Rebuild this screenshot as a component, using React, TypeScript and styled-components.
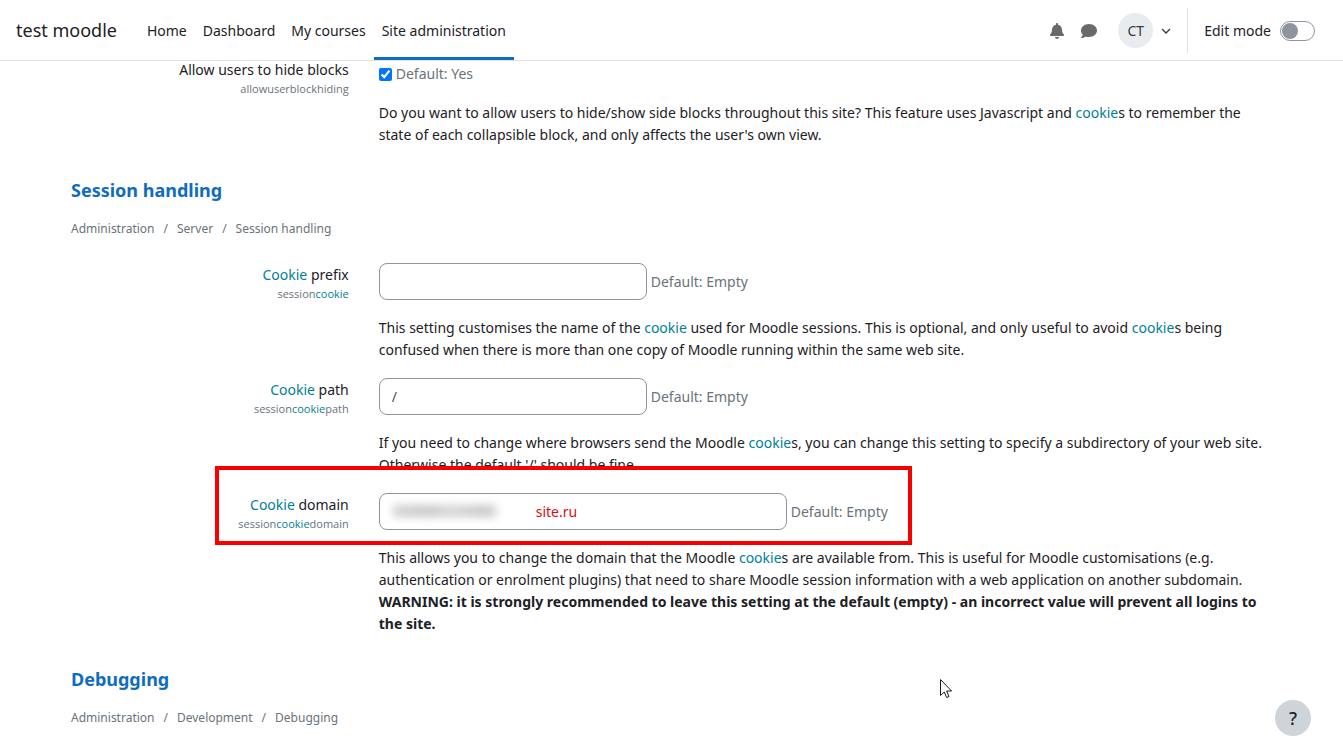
import React from 'react';
import styled, { createGlobalStyle } from 'styled-components';
import { FaBell, FaComment } from 'react-icons/fa';

const GlobalStyle = createGlobalStyle`
  *, *::before, *::after { box-sizing: border-box; }
  html, body { height: 100%; overflow: hidden; }
  body {
    margin: 0;
    background: #fff;
    color: #1d2125;
    font-family: "Noto Sans", "Open Sans", sans-serif;
    font-size: 14px;
    line-height: 22px;
  }
`;

const Navbar = styled.header`
  position: fixed;
  top: 0;
  left: 0;
  right: 0;
  z-index: 10;
  height: 61px;
  display: flex;
  align-items: stretch;
  padding: 0 28px 0 16px;
  background: #fff;
  border-bottom: 1px solid #dee2e6;
`;

const Brand = styled.a`
  display: flex;
  align-items: center;
  margin-right: 22px;
  font-size: 18px;
  color: #1d2125;
  text-decoration: none;
  white-space: nowrap;
`;

const PrimaryNav = styled.nav`
  display: flex;
`;

const NavLink = styled.a<{ $active?: boolean }>`
  display: flex;
  align-items: center;
  padding: 4px 8px 0;
  border-bottom: 3px solid ${(p) => (p.$active ? '#0f6cbf' : 'transparent')};
  color: #1d2125;
  text-decoration: none;
  white-space: nowrap;
`;

const UserTools = styled.div`
  display: flex;
  align-items: center;
  margin-left: auto;
  padding-top: 1px;
`;

const IconButton = styled.button`
  display: flex;
  align-items: center;
  justify-content: center;
  width: 32px;
  height: 32px;
  padding: 0;
  border: 0;
  background: none;
  color: #6a6a6a;
  font-size: 16px;
`;

const UserMenu = styled.button`
  display: flex;
  align-items: center;
  gap: 8px;
  margin-left: 13px;
  padding: 0;
  border: 0;
  background: none;
  color: #343a40;
  font: inherit;
`;

const Avatar = styled.span`
  display: flex;
  align-items: center;
  justify-content: center;
  width: 35px;
  height: 35px;
  border-radius: 50%;
  background: #e9ecef;
`;

const EditMode = styled.label`
  display: flex;
  align-items: center;
  gap: 9px;
  height: 45px;
  margin-left: 16px;
  padding-left: 16px;
  border-left: 1px solid #dee2e6;
  white-space: nowrap;
`;

const Switch = styled.input`
  appearance: none;
  display: flex;
  align-items: center;
  width: 35px;
  height: 20px;
  margin: 0;
  padding: 0 1px;
  border: 1px solid #8f959e;
  border-radius: 10px;
  background: #fff;

  &::before {
    content: '';
    width: 16px;
    height: 16px;
    border-radius: 50%;
    background: #8f95a0;
  }
`;

const Main = styled.main`
  padding: 58px 56px 0;
`;

const Setting = styled.div`
  position: relative;
  display: grid;
  grid-template-columns: 1fr 3fr;
  margin-bottom: 17px;
`;

const LabelCell = styled.div`
  padding: 1px 15px 0;
  text-align: right;
`;

const SettingLabel = styled.label`
  display: block;
`;

const ShortName = styled.span`
  display: block;
  font-family: "Open Sans", "Noto Sans", sans-serif;
  font-size: 11px;
  line-height: 16px;
  color: #6a737b;
`;

const ValueCell = styled.div<{ $compact?: boolean }>`
  padding: ${(p) => (p.$compact ? '5px' : '0')} 15px 0;
`;

const ValueRow = styled.div`
  position: relative;
  display: flex;
  align-items: center;
  gap: 4px;
`;

const Checkbox = styled.input`
  width: 13px;
  height: 13px;
  margin: 0;
  accent-color: #0075ff;
`;

const TextInput = styled.input<{ $wide?: boolean; $masked?: boolean }>`
  width: ${(p) => (p.$wide ? '408px' : '268px')};
  height: 37px;
  padding: 0 12px 0 ${(p) => (p.$masked ? '156px' : '12px')};
  border: 1px solid #8f959e;
  border-radius: 8px;
  background: #fff;
  color: ${(p) => (p.$masked ? '#e00b0b' : '#495057')};
  font: inherit;
`;

const MaskedHost = styled.span`
  position: absolute;
  left: 14px;
  top: 12px;
  width: 104px;
  height: 12px;
  filter: blur(4px);
  background: linear-gradient(90deg, #d2d2d2, #c8c8c8 35%, #d6d6d6 55%, #c8c8c8 90%, #dcdcdc);
`;

const DefaultInfo = styled.span`
  color: #6a737b;
`;

const Description = styled.p`
  margin: 17px 0 0;
`;

const GlossaryLink = styled.a`
  color: #008196;
  text-decoration: none;
`;

const SectionTitle = styled.h3`
  margin: 33px 15px 17px;
  font-size: 18px;
  line-height: 22px;
  font-weight: 700;
  color: #0f6cbf;
`;

const Breadcrumb = styled.ol`
  display: flex;
  margin: 0 15px 23px;
  padding: 0;
  list-style: none;
  font-size: 12px;
  color: #6a737b;

  li + li::before {
    content: '/';
    padding: 0 9px;
  }
`;

const Crumb = styled.a`
  color: inherit;
  text-decoration: none;
`;

const Highlight = styled.div`
  position: absolute;
  top: -27px;
  left: 159px;
  width: 697px;
  height: 79px;
  border: 4px solid #f80000;
  pointer-events: none;
`;

const HelpButton = styled.button`
  position: fixed;
  right: 32px;
  bottom: 20px;
  width: 36px;
  height: 36px;
  padding: 0;
  border: 0;
  border-radius: 50%;
  background: #ced4da;
  color: #1d2125;
  font: inherit;
  font-size: 18px;
  font-weight: 500;
`;

const Pointer = styled.svg`
  position: fixed;
  left: 940px;
  top: 679px;
`;

const Term = ({ children }: { children: React.ReactNode }) => (
  <GlossaryLink href="#">{children}</GlossaryLink>
);

const Crumbs = ({ items }: { items: string[] }) => (
  <Breadcrumb>
    {items.map((item) => (
      <li key={item}>
        <Crumb href="#">{item}</Crumb>
      </li>
    ))}
  </Breadcrumb>
);

export default function App() {
  return (
    <>
      <GlobalStyle />
      <Navbar>
        <Brand href="#">test moodle</Brand>
        <PrimaryNav>
          <NavLink href="#">Home</NavLink>
          <NavLink href="#">Dashboard</NavLink>
          <NavLink href="#">My courses</NavLink>
          <NavLink href="#" $active>
            Site administration
          </NavLink>
        </PrimaryNav>
        <UserTools>
          <IconButton aria-label="Notifications">
            <FaBell />
          </IconButton>
          <IconButton aria-label="Messages">
            <FaComment />
          </IconButton>
          <UserMenu aria-label="User menu">
            <Avatar>CT</Avatar>
            <svg width="10" height="6" viewBox="0 0 10 6" fill="none" stroke="#343a40" strokeWidth="1.3">
              <path d="M1 1l4 4 4-4" />
            </svg>
          </UserMenu>
          <EditMode>
            Edit mode
            <Switch type="checkbox" role="switch" />
          </EditMode>
        </UserTools>
      </Navbar>

      <Main>
        <Setting>
          <LabelCell>
            <SettingLabel htmlFor="hideblocks">Allow users to hide blocks</SettingLabel>
            <ShortName>allowuserblockhiding</ShortName>
          </LabelCell>
          <ValueCell $compact>
            <ValueRow>
              <Checkbox id="hideblocks" type="checkbox" defaultChecked />
              <DefaultInfo>Default: Yes</DefaultInfo>
            </ValueRow>
            <Description>
              Do you want to allow users to hide/show side blocks throughout this site? This feature uses Javascript
              and <Term>cookie</Term>s to remember the state of each collapsible block, and only affects the user's own
              view.
            </Description>
          </ValueCell>
        </Setting>

        <SectionTitle>Session handling</SectionTitle>
        <Crumbs items={['Administration', 'Server', 'Session handling']} />

        <Setting>
          <LabelCell>
            <SettingLabel htmlFor="prefix">
              <Term>Cookie</Term> prefix
            </SettingLabel>
            <ShortName>
              session<Term>cookie</Term>
            </ShortName>
          </LabelCell>
          <ValueCell>
            <ValueRow>
              <TextInput id="prefix" type="text" />
              <DefaultInfo>Default: Empty</DefaultInfo>
            </ValueRow>
            <Description>
              This setting customises the name of the <Term>cookie</Term> used for Moodle sessions. This is optional,
              and only useful to avoid <Term>cookie</Term>s being confused when there is more than one copy of Moodle
              running within the same web site.
            </Description>
          </ValueCell>
        </Setting>

        <Setting>
          <LabelCell>
            <SettingLabel htmlFor="path">
              <Term>Cookie</Term> path
            </SettingLabel>
            <ShortName>
              session<Term>cookie</Term>path
            </ShortName>
          </LabelCell>
          <ValueCell>
            <ValueRow>
              <TextInput id="path" type="text" defaultValue="/" />
              <DefaultInfo>Default: Empty</DefaultInfo>
            </ValueRow>
            <Description>
              If you need to change where browsers send the Moodle <Term>cookie</Term>s, you can change this setting to
              specify a subdirectory of your web site. Otherwise the default '/' should be fine.
            </Description>
          </ValueCell>
        </Setting>

        <Setting>
          <LabelCell>
            <SettingLabel htmlFor="domain">
              <Term>Cookie</Term> domain
            </SettingLabel>
            <ShortName>
              session<Term>cookie</Term>domain
            </ShortName>
          </LabelCell>
          <ValueCell>
            <ValueRow>
              <TextInput id="domain" type="text" defaultValue="site.ru" $wide $masked />
              <MaskedHost />
              <DefaultInfo>Default: Empty</DefaultInfo>
            </ValueRow>
            <Description>
              This allows you to change the domain that the Moodle <Term>cookie</Term>s are available from. This is
              useful for Moodle customisations (e.g. authentication or enrolment plugins) that need to share Moodle
              session information with a web application on another subdomain.{' '}
              <strong>
                WARNING: it is strongly recommended to leave this setting at the default (empty) - an incorrect value
                will prevent all logins to the site.
              </strong>
            </Description>
          </ValueCell>
          <Highlight />
        </Setting>

        <SectionTitle>Debugging</SectionTitle>
        <Crumbs items={['Administration', 'Development', 'Debugging']} />
      </Main>

      <HelpButton aria-label="Help">?</HelpButton>
      <Pointer width="13" height="20" viewBox="0 0 13 20" fill="#fff" stroke="#1a1a24" strokeWidth="1">
        <path d="M.5 .5v16l3.700-3.500 2.500 5.500 2.300-1-2.400-5.500h5z" />
      </Pointer>
    </>
  );
}
